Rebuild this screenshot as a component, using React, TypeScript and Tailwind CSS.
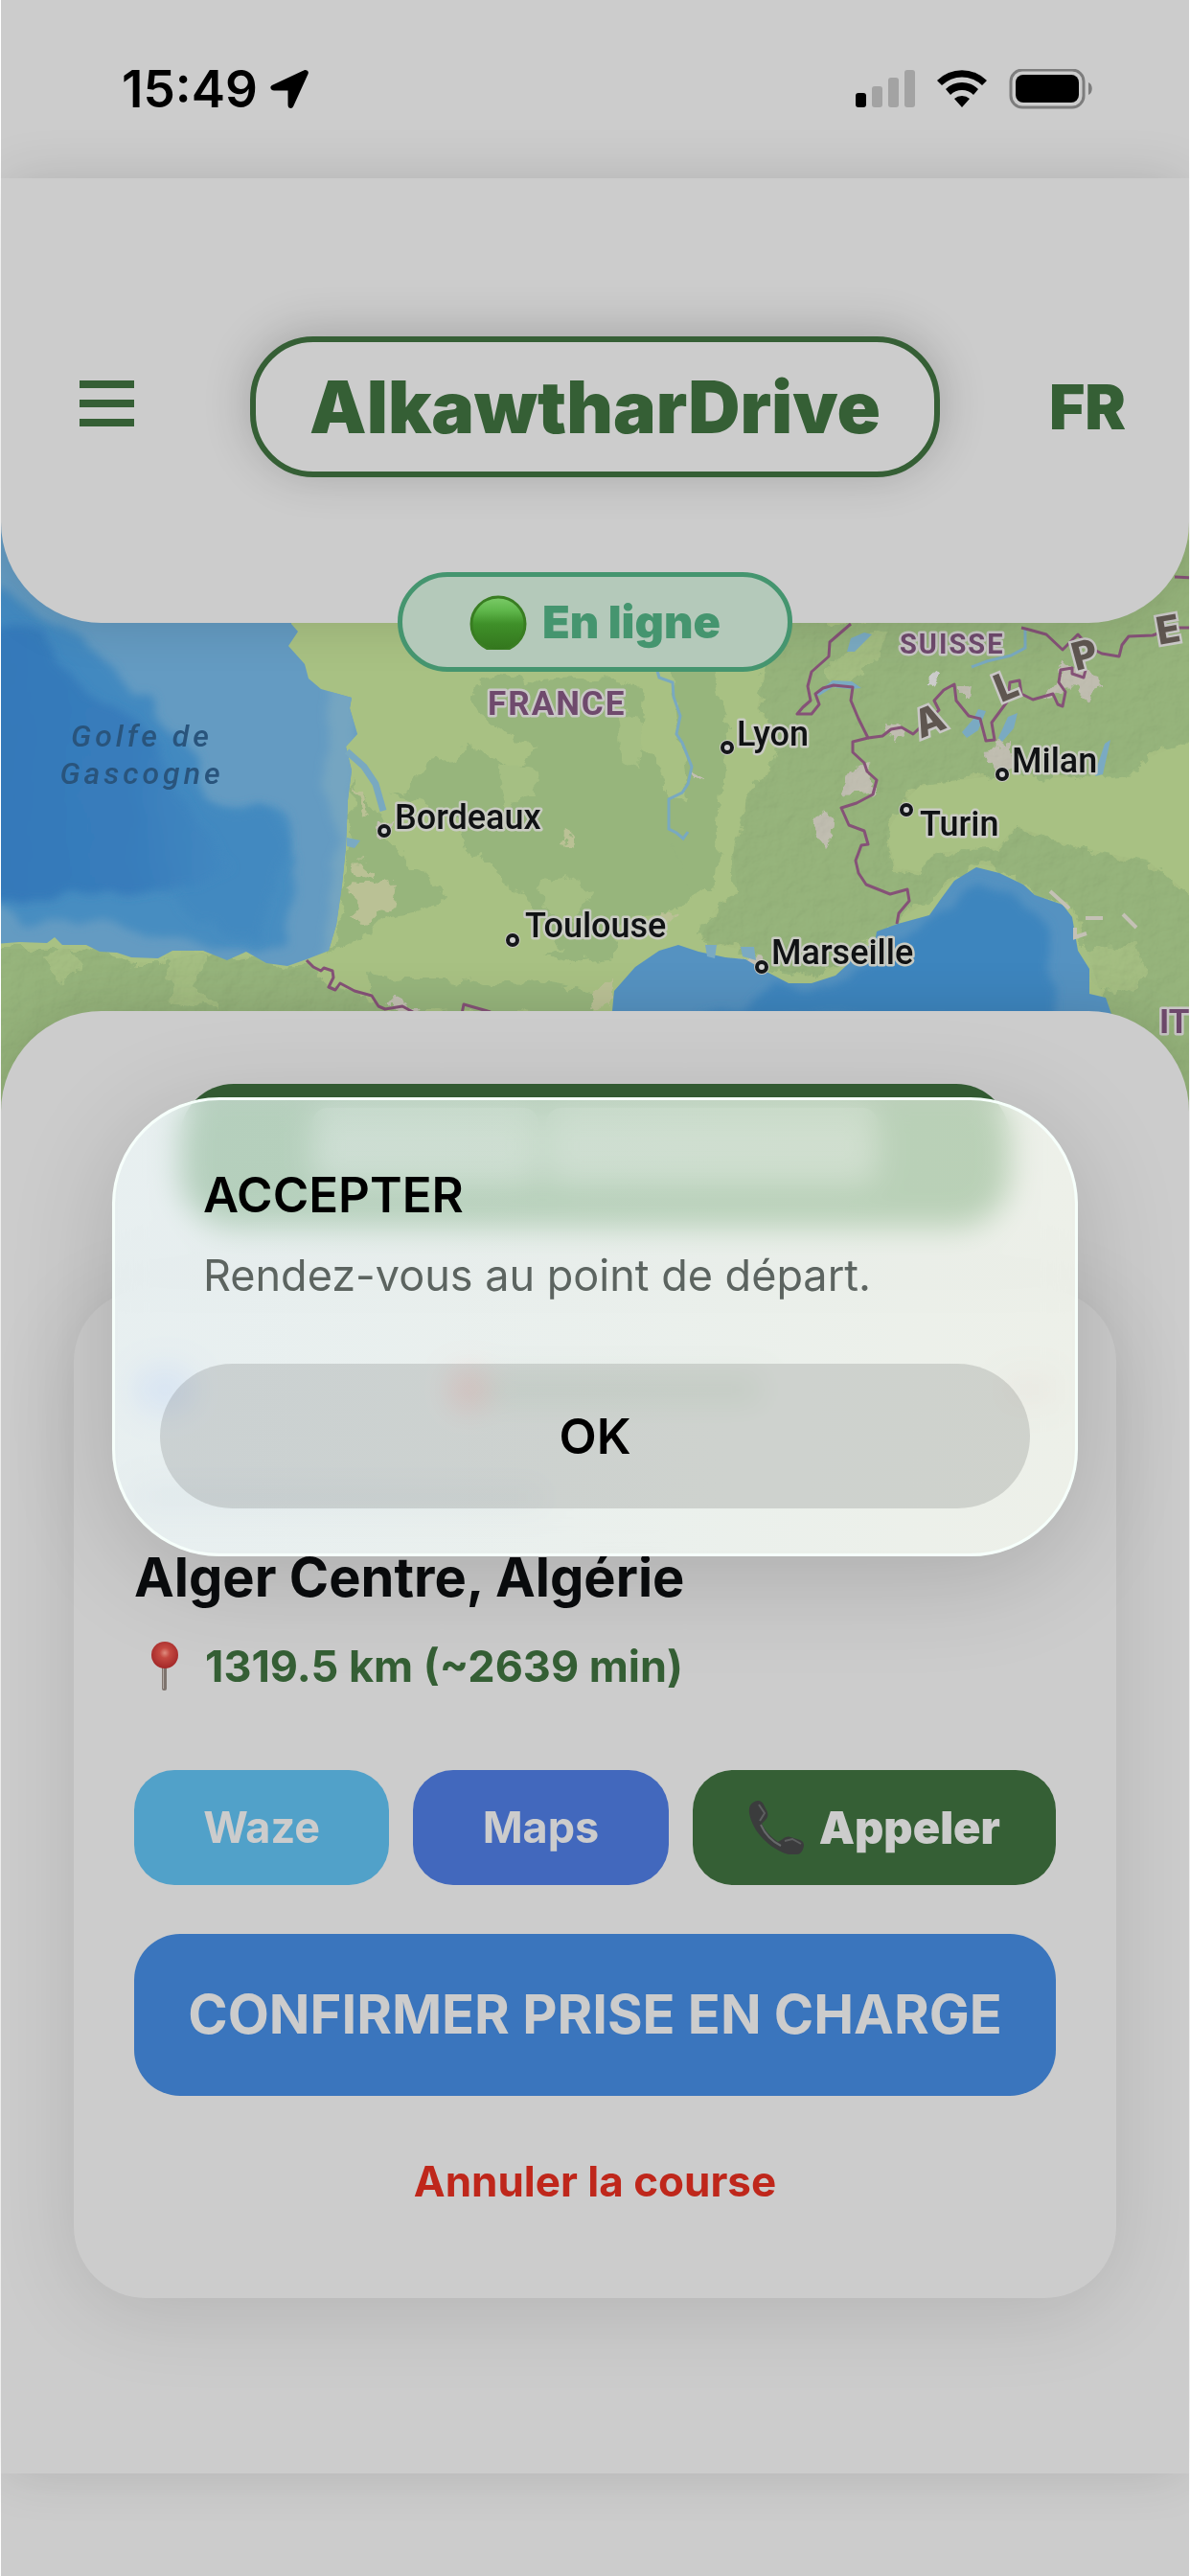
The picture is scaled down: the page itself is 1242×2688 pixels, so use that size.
import React, { useState } from 'react';

interface City {
    name: string;
    dot: [number, number];
    label: [number, number];
}

const CITIES: City[] = [
    { name: 'Bordeaux', dot: [401, 867], label: [412, 865] },
    { name: 'Toulouse', dot: [535, 981], label: [548, 978] },
    { name: 'Lyon', dot: [759, 780], label: [769, 778] },
    { name: 'Milan', dot: [1046, 808], label: [1056, 806] },
    { name: 'Turin', dot: [946, 845], label: [960, 872] },
    { name: 'Marseille', dot: [795, 1009], label: [805, 1006] }
];

const ALPS = [
    { letter: 'A', x: 970, y: 752, angle: -22 },
    { letter: 'L', x: 1050, y: 716, angle: -22 },
    { letter: 'P', x: 1132, y: 683, angle: -15 },
    { letter: 'E', x: 1219, y: 657, angle: -10 }
];

const WEST_SEA = '-20,530 300,530 304,651 311,659 301,674 318,693 322,708 335,719 367,728 365,739 373,766 361,779 367,804 363,835 361,884 357,923 351,965 343,992 320,1001 300,1008 278,1005 257,993 237,1002 212,992 180,992 165,1000 137,999 122,994 104,993 90,986 65,986 57,978 49,984 20,983 -20,986';
const WEST_DEEP = '-30,600 24,636 61,655 85,668 118,693 135,720 163,739 171,766 204,789 216,827 245,846 282,850 302,881 294,904 270,972 196,966 184,930 122,927 61,927 -30,934';
const SOUTH_SEA = '639,1075 639,1055 641,1034 663,1009 688,992 708,986 729,993 757,999 778,1001 802,1015 823,1026 847,1026 872,1018 884,1007 890,995 913,984 915,972 937,964 970,955 982,938 996,919 1019,905 1043,911 1068,923 1080,934 1109,944 1119,957 1125,992 1137,1011 1137,1037 1154,1041 1166,1075';

// darker woodland / mountain areas
const WOODS = [
    '367,812 384,838 398,850 400,872 420,890 428,904 455,922 462,930 460,942 422,952 400,956 372,984 345,995 356,940 366,870',
    '445,795 475,790 480,780 505,784 540,800 560,780 500,750 490,722 520,705 560,712 640,708 670,715 665,780 690,800 700,830 730,850 725,900 735,930 700,950 650,955 640,990 600,1000 575,975 560,950 545,930 520,912 490,885 480,855 465,848 440,836 405,826 430,822',
    '-10,990 90,990 140,1004 165,1004 210,994 260,1000 300,1012 322,1008 345,1030 390,1042 410,1060 300,1060 200,1110 100,1170 -10,1180',
    '395,1055 385,1015 420,1022 470,1022 520,1030 570,1026 625,1035 615,1060',
    '570,995 600,980 640,975 640,1000 600,1005',
    '790,740 800,690 830,640 860,650 960,640 1250,560 1250,770 1200,790 1180,805 1100,812 1060,806 960,820 945,835 925,870 935,905 960,910 975,890 1040,885 1060,862 1110,880 1200,900 1250,940 1250,1200 1170,1100 1140,1010 1120,950 1080,930 1040,905 1015,900 980,930 940,960 900,980 895,1000 850,1020 800,1010 770,990 730,980 745,950 770,930 765,890 780,830 810,795 815,770',
    '700,690 745,700 760,760 750,870 745,930 720,930 700,880 715,830 710,780'
];

const MEADOWS = [
    '520,795 555,800 560,830 530,840',
    '640,720 655,740 668,760 665,800 650,790 645,750',
    '560,930 590,910 620,930 600,960 575,955',
    '860,700 905,665 925,655 915,690 870,720',
    '1120,990 1180,985 1195,1020 1165,1040 1145,1030',
    '45,1000 70,985 90,1010 60,1025',
    '175,996 215,994 205,1030 230,1055 180,1050'
];

const ROCKS = [
    '880,825 896,800 905,795 915,820 905,830 884,832',
    '847,858 860,845 872,848 868,880 860,890 855,870',
    '1085,728 1100,712 1106,690 1125,700 1150,705 1152,718 1140,722 1136,732 1128,726 1118,716 1102,726',
    '925,750 940,755 942,768 930,775',
    '1000,714 1010,712 1008,724 1000,724',
    '1040,778 1052,774 1060,800 1050,812 1036,800 1026,794',
    '395,858 412,856 402,875 394,870',
    '720,804 735,812 724,815',
    '772,1000 795,1002 795,1016 778,1010',
    '405,1045 425,1043 437,1052 420,1056'
];

const DRY = [
    '362,930 372,920 390,922 402,916 414,926 410,942 394,952 382,965 365,958 374,944',
    '370,904 376,898 388,908 386,914 372,910',
    '371,822 380,830 382,846 388,852 380,850',
    '590,870 600,874 598,885 588,882',
    '615,1050 620,1035 640,1020 640,1055',
    '680,960 690,950 706,954 695,965',
    '1058,1038 1066,1038 1066,1058 1058,1058'
];

const BORDERS = [
    '888,651 866,670 865,685 847,701 843,716 846,731 838,738 832,745 847,745 855,735 851,724 859,718 870,715 890,717 888,731 896,750 906,770 890,774 890,785 902,796 905,805 915,814 911,829 894,838 878,843 886,861 902,867 906,881 899,882 893,898 896,911 904,923 929,933 947,928 949,940 938,953 936,964',
    '906,770 921,768 930,761 941,759 953,766 980,741 975,731 985,720 996,714 998,731 1011,747 1023,750 1029,773 1038,772 1035,754 1052,731 1054,712 1064,710 1066,724 1078,730 1099,724 1104,735 1109,737 1112,722 1105,712 1107,699 1119,697 1119,703 1131,707 1133,699',
    '1066,655 1074,657 1092,662 1109,678 1119,668 1125,662 1138,676 1150,682 1168,685 1171,673 1178,664 1203,663 1225,655 1245,655',
    '320,1002 327,1009 335,1013 338,1010 347,1013 348,1020 343,1030 350,1033 355,1026 370,1034 388,1039 395,1050 402,1053 420,1050 431,1056',
    '482,1058 484,1048 512,1056',
    '1226,602 1245,603'
];

const Pin = () => (
    <svg viewBox="0 0 28 52" className="h-[52px] w-7" aria-hidden="true">
        <defs>
            <radialGradient id="pinHead" cx="50%" cy="42%" r="55%">
                <stop offset="0" stopColor="#e08e80" />
                <stop offset="0.35" stopColor="#c54a42" />
                <stop offset="1" stopColor="#a52a2a" />
            </radialGradient>
        </defs>
        <rect x="11" y="24" width="5" height="27" rx="2" fill="#7d746e" />
        <rect x="12" y="26" width="1" height="23" fill="#b3aaa4" />
        <circle cx="14" cy="14" r="14" fill="url(#pinHead)" />
    </svg>
);

const Phone = () => (
    <svg viewBox="0 0 58 57" className="h-[57px] w-[58px]" aria-hidden="true">
        <path d="M1 13C0 6 3 1 10 0c3 0 5 2 6 4l4 8c1 3 0 6-2 8l-4 4c3 7 10 14 17 19l5-3c2-2 5-3 8-2l10 3c3 1 4 3 4 6-1 6-4 9-7 9H42C23 51 4 32 1 13Z" fill="#3b3c3d" />
        <path d="M11 4l6 9-5 8M38 42l8-2 9 5" fill="none" stroke="#5d5f60" strokeWidth="2" />
        <path d="M13 25c4 9 11 17 21 22" fill="none" stroke="#66696a" strokeWidth="2" />
    </svg>
);

const StatusBar = () => (
    <div className="flex h-[186px] items-start justify-between pl-[126px] pr-[99px] pt-[66px]">
        <div className="flex items-center gap-3">
            <span className="text-[53px] font-semibold leading-[54px] text-black">15:49</span>
            <svg viewBox="0 0 42 42" className="h-[42px] w-[42px]" aria-hidden="true">
                <path d="M36 3 4 18c-2 1-1 3 1 3h15c1 0 1 0 1 1v15c0 3 2 3 3 1L39 5c1-2-1-3-3-2Z" fill="#000" stroke="#000" strokeWidth="3" strokeLinejoin="round" />
            </svg>
        </div>
        <svg viewBox="0 0 250 42" className="mt-[6px] h-[42px] w-[250px]" aria-hidden="true">
            <rect x="1" y="25" width="11" height="15" rx="3" />
            <rect x="18" y="18" width="11" height="22" rx="3" fill="#a3a3a3" />
            <rect x="35" y="9" width="11" height="31" rx="3" fill="#a3a3a3" />
            <rect x="52" y="1" width="11" height="39" rx="3" fill="#a3a3a3" />
            <path d="M86 12a37 37 0 0 1 52 0l-5 5a30 30 0 0 0-42 0ZM95 21a24 24 0 0 1 34 0l-5 6a17 17 0 0 0-24 0ZM104 31a12 12 0 0 1 16 0l-8 9Z" />
            <rect x="163" y="1" width="76" height="39" rx="12" fill="none" stroke="#7d7d7d" strokeWidth="3" />
            <rect x="168" y="6" width="66" height="29" rx="8" />
            <path d="M244 14c5 2 5 11 0 13Z" fill="#7d7d7d" />
        </svg>
    </div>
);

const MapView = () => (
    <svg viewBox="0 545 1242 615" preserveAspectRatio="xMidYMid slice" className="block h-full w-full" role="img" aria-label="Carte">
        <defs>
            <filter id="rough" x="-5%" y="-5%" width="110%" height="110%">
                <feTurbulence type="fractalNoise" baseFrequency="0.05" numOctaves="4" seed="4" result="n" />
                <feDisplacementMap in="SourceGraphic" in2="n" scale="22" xChannelSelector="R" yChannelSelector="G" />
            </filter>
            <filter id="soft" x="-20%" y="-20%" width="140%" height="140%">
                <feTurbulence type="fractalNoise" baseFrequency="0.02" numOctaves="3" seed="9" result="n" />
                <feDisplacementMap in="SourceGraphic" in2="n" scale="30" xChannelSelector="R" yChannelSelector="G" />
                <feGaussianBlur stdDeviation="5" />
            </filter>
            <filter id="relief" x="0" y="0" width="100%" height="100%">
                <feTurbulence type="fractalNoise" baseFrequency="0.05" numOctaves="4" seed="2" />
                <feDiffuseLighting lightingColor="#fff" surfaceScale="3">
                    <feDistantLight azimuth="225" elevation="55" />
                </feDiffuseLighting>
                <feComposite in2="SourceGraphic" operator="in" />
            </filter>
            <linearGradient id="deep" x1="0" y1="0" x2="1" y2="0">
                <stop offset="0" stopColor="#3578b9" />
                <stop offset="0.6" stopColor="#377cbb" />
                <stop offset="1" stopColor="#4389c1" />
            </linearGradient>
            <clipPath id="westClip"><polygon points={WEST_SEA} /></clipPath>
            <clipPath id="southClip"><polygon points={SOUTH_SEA} /></clipPath>
        </defs>
        <rect y="545" width="1242" height="615" fill="#a8c183" />
        <g filter="url(#rough)">
            {WOODS.map((p) => <polygon key={p} points={p} fill="#97b57c" />)}
            {MEADOWS.map((p) => <polygon key={p} points={p} fill="#a5bf83" />)}
            {DRY.map((p) => <polygon key={p} points={p} fill="#bac195" />)}
            {ROCKS.map((p) => <polygon key={p} points={p} fill="#c2bfb2" />)}
            <polygon points="967,715 975,700 984,706 975,716" fill="#cfcfce" />
        </g>
        <g className="mix-blend-multiply" opacity="0.16" filter="url(#relief)">
            <polygon points={WOODS[5]} />
            <polygon points={WOODS[2]} />
        </g>
        <polygon points={WEST_SEA} fill="#649bc2" />
        <g clipPath="url(#westClip)">
            <polygon points="345,700 380,730 366,1000 335,1010 350,880 340,780" fill="#74a5c1" filter="url(#soft)" />
            <polygon points="200,830 300,850 305,900 300,985 180,985 110,960 20,965 -20,920" fill="#468dc1" filter="url(#soft)" />
            <polygon points={WEST_DEEP} fill="#4289c0" filter="url(#soft)" />
            <polygon points="-30,650 45,665 90,720 150,760 180,820 220,870 240,900 200,925 -30,940" fill="url(#deep)" filter="url(#soft)" />
        </g>
        <polygon points={SOUTH_SEA} fill="#5592c1" />
        <g clipPath="url(#southClip)">
            <polygon points="730,1065 800,1035 890,1020 930,980 990,950 1010,920 1060,930 1090,970 1105,1065" fill="#3d85be" filter="url(#soft)" />
        </g>
        <g fill="none" stroke="#79a9c0" strokeWidth="3">
            <polyline points="686,700 688,707 702,712 703,727 710,747 706,766 712,775 722,800 718,818 712,827 698,834 698,865 706,869 713,875 718,868" />
            <polyline points="1070,655 1070,676 1055,684 1030,690 1014,696" />
            <polyline points="362,784 380,800 392,818 400,846" strokeWidth="7" />
        </g>
        <g fill="#7aaac2">
            <path d="M851 724l18-14 20 1 10 7-12 1-18-2-14 9ZM884 680l4-14 14-6 8 2-18 18ZM1016 750l5-10 8 2-8 20-12 8-5-6ZM1052 748l10-4-4 16-12 14-4-4ZM1145 800l8-24 6-4-8 36-8 2ZM362 874l14 3-6 8-8-2ZM736 986l12 0-2 14-8-2ZM773 988l14 0 2 14-14-4Z" />
        </g>
        <g fill="none" stroke="#c4c1b5" strokeWidth="4">
            <path d="M1096 930l20 18M1133 958l18 0M1172 954l14 14M1122 968v10l12-4" />
        </g>
        <g fill="none" stroke="#855277" strokeWidth="3" strokeLinejoin="round">
            {BORDERS.map((p) => <polyline key={p} points={p} />)}
        </g>

        <g className="font-[Roboto,sans-serif] text-[32px] font-medium italic tracking-[4px]" fill="#29547c" textAnchor="middle">
            <text x="148" y="779">Golfe de</text>
            <text x="148" y="818">Gascogne</text>
        </g>
        <g className="font-[Roboto,sans-serif] font-bold" fill="#6f4a6d" stroke="#c9c7c6" strokeWidth="5" strokeLinejoin="round" paintOrder="stroke">
            <text x="509" y="746" className="text-[35px] tracking-[2px]">FRANCE</text>
            <text x="939" y="682" className="text-[29px] tracking-[2px]">SUISSE</text>
            <text x="1210" y="1078" className="text-[35px]">IT</text>
        </g>
        <g className="font-[Inter,sans-serif] text-[40px] font-extrabold" fill="#5f5650" stroke="#c9c7c6" strokeWidth="5" paintOrder="stroke" textAnchor="middle">
            {ALPS.map((a) => (
                <text key={a.letter} x={a.x} y={a.y + 14} transform={`rotate(${a.angle} ${a.x} ${a.y})`}>{a.letter}</text>
            ))}
        </g>
        <g className="font-[Roboto,sans-serif] text-[36px] font-medium" fill="#101214">
            {CITIES.map((c) => (
                <g key={c.name}>
                    <circle cx={c.dot[0]} cy={c.dot[1]} r="8" fill="#c9c9c4" />
                    <circle cx={c.dot[0]} cy={c.dot[1]} r="5" fill="#d2d2d2" stroke="#15171a" strokeWidth="4" />
                    <text x={c.label[0]} y={c.label[1]} stroke="#c9cbc2" strokeWidth="5" strokeLinejoin="round" paintOrder="stroke">{c.name}</text>
                </g>
            ))}
        </g>
    </svg>
);

const Header = () => (
    <header className="relative z-20 grid grid-cols-[1fr_auto_1fr] items-center rounded-b-[105px] bg-[#ccc] px-[66px] pb-[152px] pt-[165px] text-[#355f35] shadow-[0_0_60px_-6px_rgba(0,0,0,0.16)]">
        <button type="button" aria-label="Menu" className="ml-4 flex w-[57px] flex-col gap-3 pb-2">
            <span className="h-2 w-full bg-[#355f35]" />
            <span className="h-2 w-full bg-[#355f35]" />
            <span className="h-2 w-full bg-[#355f35]" />
        </button>
        <h1 className="rounded-[66px] border-[6px] border-[#355f35] bg-[#ccc] px-[56px] text-[75px] font-black leading-[135px] shadow-[0_-4px_50px_rgba(0,0,0,0.2)]">
            AlkawtharDrive
        </h1>
        <button type="button" className="justify-self-end text-[64px] font-black leading-[80px]">FR</button>
    </header>
);

const RideCard = () => (
    <article className="mx-[76px] mt-[65px] rounded-[75px] bg-[#ccc] px-[63px] pb-[70px] pt-20 shadow-[0_14px_90px_rgba(0,0,0,0.12)]">
        <div className="flex h-12 items-center justify-between" aria-hidden="true">
            <span className="h-12 w-16 rounded-full bg-[#5d78c4]/40" />
            <span className="ml-4 flex items-center">
                <span className="h-10 w-9 rounded-full bg-[#c0302c]/50" />
                <span className="h-7 w-72 bg-[#355f35]/25" />
            </span>
            <span className="h-8 w-14 bg-[#a88]/30" />
        </div>
        <div className="mt-[72px] h-8 w-[430px] bg-[#9a9faa]/40" />
        <h2 className="mt-[34px] text-[56px] font-bold leading-[68px] text-[#0a0c0e]">Alger Centre, Algérie</h2>
        <p className="mt-[31px] flex items-center gap-[28px] pl-[18px] text-[45px] font-bold leading-[56px] text-[#355f35]">
            <Pin />
            1319.5 km (~2639 min)
        </p>
        <div className="mt-20 flex gap-[25px] text-[45px] leading-[120px] text-[#ccc]">
            <button type="button" className="flex-1 rounded-[42px] bg-[#51a1c9] font-bold">Waze</button>
            <button type="button" className="flex-1 rounded-[42px] bg-[#4268bd] font-bold">Maps</button>
            <button type="button" className="flex items-center gap-4 rounded-[42px] bg-[#355f35] px-[58px] text-[47px] font-black">
                <Phone />
                Appeler
            </button>
        </div>
        <button type="button" className="mt-[51px] block w-full rounded-[48px] bg-[#3a75bd] text-[56px] font-bold leading-[169px] text-[#ccc]">
            CONFIRMER PRISE EN CHARGE
        </button>
        <button type="button" className="mx-auto mt-[37px] block px-8 text-[44px] font-bold leading-[104px] text-[#bf271b]">
            Annuler la course
        </button>
    </article>
);

const AcceptDialog = ({ onClose }: { onClose: () => void }) => (
    <div className="fixed inset-0 z-50 flex items-center justify-center pt-20">
        <div
            role="dialog"
            aria-modal="true"
            aria-labelledby="dialogTitle"
            className="mx-[116px] w-full max-w-[1008px] rounded-[112px] border-[3px] border-[#f6fffb] bg-linear-to-r from-[#f2fdff]/70 to-[#fafff4]/70 p-[47px] shadow-[0_20px_110px_rgba(0,0,0,0.16)] backdrop-blur-lg backdrop-saturate-150"
        >
            <h2 id="dialogTitle" className="mt-[18px] px-[45px] text-[51px] font-semibold leading-[68px] text-black">ACCEPTER</h2>
            <p className="mt-[22px] px-[45px] text-[45px] leading-[56px] text-[#5c6460]">Rendez-vous au point de départ.</p>
            <button type="button" onClick={onClose} className="mt-[64px] w-full rounded-full bg-black/12 text-[51px] font-semibold leading-[151px] text-black">
                OK
            </button>
        </div>
    </div>
);

const App: React.FC = () => {
    const [open, setOpen] = useState(true);

    return (
        <div className="min-h-screen border-x border-white bg-[#ccc] font-[Inter,sans-serif]">
            <StatusBar />
            <main>
                <Header />
                <div className="relative z-20 -mt-[53px] flex justify-center">
                    <div className="flex items-center gap-4 rounded-full border-[5px] border-[#45956f] bg-[#b4c9ba] px-[70px] text-[47px] font-black leading-[94px] text-[#45956f]">
                        <svg viewBox="0 0 60 57" className="h-[57px] w-[60px]" aria-hidden="true">
                            <defs>
                                <linearGradient id="led" x1="0" y1="0" x2="0" y2="1">
                                    <stop offset="0" stopColor="#7ccc69" />
                                    <stop offset="0.25" stopColor="#5fb74b" />
                                    <stop offset="0.5" stopColor="#3f9029" />
                                    <stop offset="1" stopColor="#33751d" />
                                </linearGradient>
                            </defs>
                            <circle cx="30" cy="30" r="28" fill="url(#led)" stroke="#397d22" strokeWidth="3" />
                        </svg>
                        En ligne
                    </div>
                </div>
                <div className="-mt-[156px] h-[615px]">
                    <MapView />
                </div>
                <section className="relative z-10 -mt-[105px] rounded-t-[105px] bg-[#ccc] pb-[183px] pt-[76px] shadow-[0_0_60px_-6px_rgba(0,0,0,0.16)]">
                    <div className="mx-[187px] flex h-[150px] items-center justify-center gap-2 rounded-[56px] bg-[#355f35]" aria-hidden="true">
                        <span className="-mt-5 h-20 w-[236px] rounded-2xl bg-[#ccc]/45" />
                        <span className="-mt-5 h-20 w-[346px] rounded-2xl bg-[#ccc]/45" />
                    </div>
                    <RideCard />
                </section>
            </main>
            {open && <AcceptDialog onClose={() => setOpen(false)} />}
        </div>
    );
};

export default App;
